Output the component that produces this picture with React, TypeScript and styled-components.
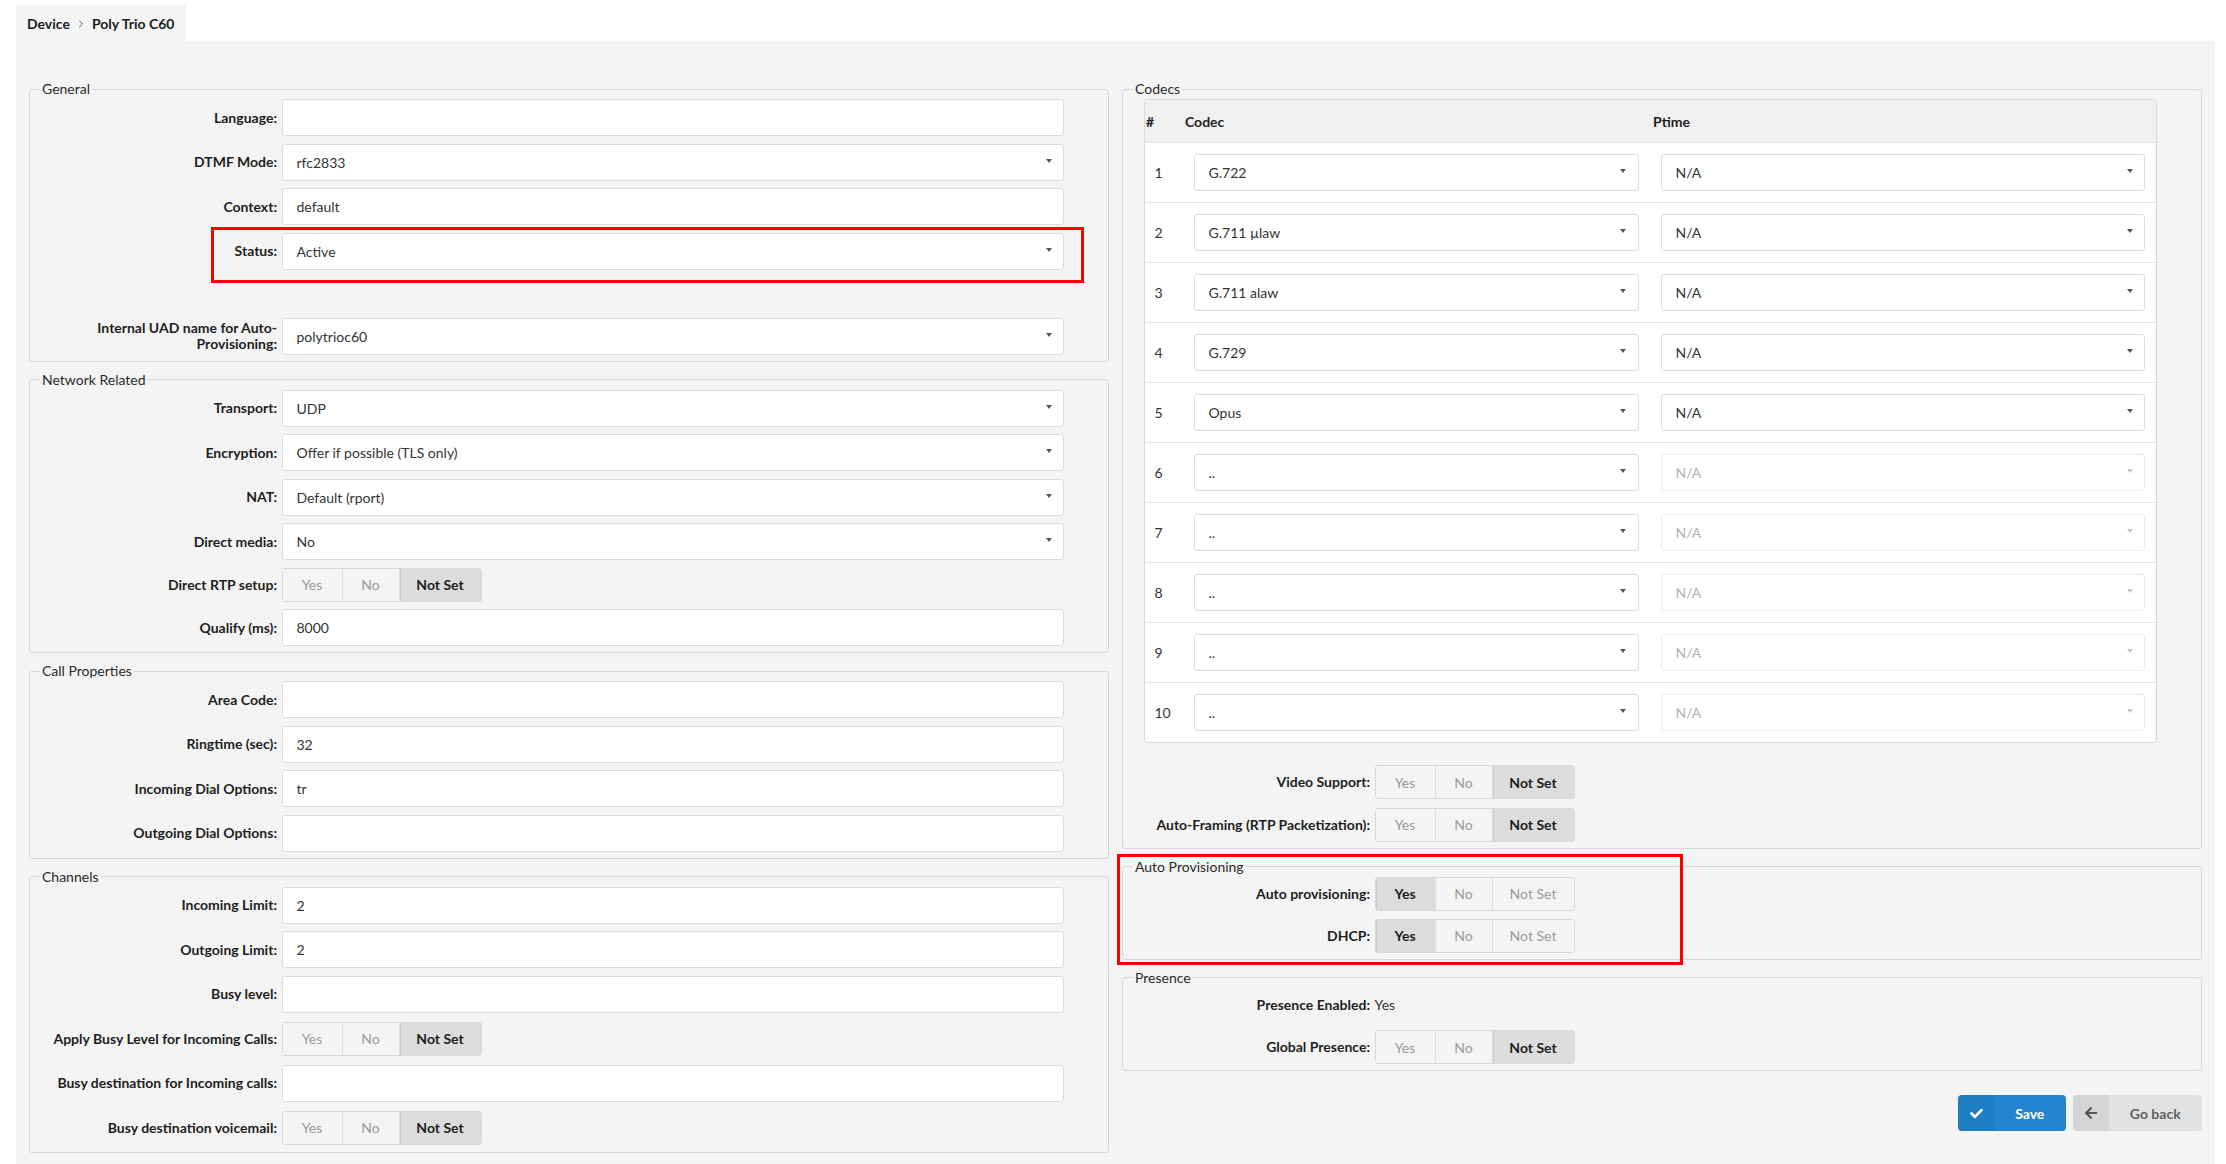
import React from "react";
import styled, { createGlobalStyle, css } from "styled-components";
import { FaCheck, FaArrowLeft } from "react-icons/fa";
import { ChevronRight } from "lucide-react";

const GlobalStyle = createGlobalStyle`
  html, body { margin: 0; padding: 0; background: #ffffff; }
  body { font-family: Lato, "Open Sans", "Liberation Sans", sans-serif; color: #212121; }
  * { box-sizing: border-box; }
`;

const Page = styled.div`
  padding: 5px 11px 0 16px;
`;

const Crumbs = styled.div`
  display: inline-flex;
  align-items: center;
  height: 36px;
  padding: 0 11px;
  background: #f4f4f4;
  font-size: 14px;
  font-weight: 700;
  color: #1b1c1d;
  gap: 5px;
  svg { color: #555; margin-top: 1px; }
`;

const Panel = styled.div`
  background: #f4f4f4;
  padding: 40px 13px 14px;
  display: grid;
  grid-template-columns: 1fr 1fr;
  column-gap: 13px;
  align-items: start;
`;

const Column = styled.div`
  display: flex;
  flex-direction: column;
  gap: 10px;
`;

const Fieldset = styled.fieldset`
  margin: 0;
  min-width: 0;
  border: 1px solid #d6d6d6;
  border-radius: 3px;
  padding: 2px 0 6px;
`;

const Legend = styled.legend`
  margin-left: 10px;
  padding: 0 2px;
  font-size: 14px;
  line-height: 16px;
  color: #2a2a2a;
`;

const Rows = styled.div<{ $padRight?: number; $gap?: number }>`
  display: flex;
  flex-direction: column;
  gap: ${(p) => p.$gap ?? 7.5}px;
  padding-right: ${(p) => p.$padRight ?? 0}px;
`;

const Row = styled.div<{ $minH?: number }>`
  position: relative;
  display: grid;
  grid-template-columns: 247px 1fr;
  column-gap: 4.5px;
  align-items: center;
  min-height: ${(p) => p.$minH ?? 37}px;
`;

const Label = styled.label`
  text-align: right;
  font-weight: 700;
  font-size: 14px;
  line-height: 16px;
  color: #1e1e1e;
`;

const fieldBase = css`
  height: 37px;
  border: 1px solid #dcdcdc;
  border-radius: 3px;
  background: #ffffff;
  padding: 0 11.5px 0 14px;
  font-size: 14px;
  color: #333333;
  display: flex;
  align-items: center;
`;

const Input = styled.div`
  ${fieldBase}
`;

const SelectBox = styled.div<{ $disabled?: boolean }>`
  ${fieldBase}
  justify-content: space-between;
  ${(p) =>
    p.$disabled &&
    css`
      border-color: #ececec;
      color: #b0b0b0;
    `}
`;

const Caret = styled.span<{ $disabled?: boolean }>`
  width: 0;
  height: 0;
  border-left: 3.5px solid transparent;
  border-right: 3.5px solid transparent;
  border-top: 4px solid ${(p) => (p.$disabled ? "#c4c4c4" : "#555555")};
  margin-top: -3px;
`;

const Select = ({ value, disabled }: { value: string; disabled?: boolean }) => (
  <SelectBox $disabled={disabled}>
    <span>{value}</span>
    <Caret $disabled={disabled} />
  </SelectBox>
);

const ToggleGroup = styled.div`
  display: inline-flex;
  height: 34px;
  border: 1px solid #d8d8d8;
  border-radius: 3px;
  overflow: hidden;
  justify-self: start;
`;

const Seg = styled.div<{ $active?: boolean; $w: number }>`
  width: ${(p) => p.$w}px;
  display: flex;
  align-items: center;
  justify-content: center;
  font-size: 14px;
  color: ${(p) => (p.$active ? "#1e1e1e" : "#9a9a9a")};
  font-weight: ${(p) => (p.$active ? 700 : 400)};
  background: ${(p) => (p.$active ? "#dcdcdc" : "#f4f4f4")};
  box-shadow: ${(p) => (p.$active ? "inset 1px 0 0 #c9c9c9" : "none")};
  & + & { border-left: 1px solid #dddddd; }
`;

type Choice = "Yes" | "No" | "Not Set";
const Toggle = ({ value }: { value: Choice }) => (
  <ToggleGroup>
    <Seg $w={59} $active={value === "Yes"}>Yes</Seg>
    <Seg $w={57} $active={value === "No"}>No</Seg>
    <Seg $w={82} $active={value === "Not Set"}>Not Set</Seg>
  </ToggleGroup>
);

const Spacer = styled.div<{ $h: number }>`
  height: ${(p) => p.$h}px;
`;

const Annotation = styled.div`
  position: absolute;
  border: 3px solid #ff0000;
  pointer-events: none;
`;

const StatusMark = styled(Annotation)`
  top: -6px;
  left: 181px;
  right: -20px;
  bottom: -13px;
`;

const Highlight = styled.div`
  position: relative;
`;

const ProvMark = styled(Annotation)`
  top: -5px;
  left: -5.5px;
  width: 566px;
  bottom: -5px;
`;

const Table = styled.div`
  margin: 0 44px 0 20.5px;
  border: 1px solid #d9d9d9;
  border-radius: 3px;
  background: #ffffff;
  overflow: hidden;
`;

const THead = styled.div`
  display: grid;
  grid-template-columns: 39px 468px 1fr;
  align-items: center;
  height: 43px;
  padding-left: 1.5px;
  background: #f0f0f0;
  border-bottom: 1px solid #e2e2e2;
  font-size: 14px;
  font-weight: 700;
  color: #1e1e1e;
`;

const TRow = styled.div`
  display: grid;
  grid-template-columns: 49px 445px 1fr;
  align-items: center;
  height: 60px;
  padding-right: 11px;
  border-bottom: 1px solid #e6e6e6;
  font-size: 14px;
  color: #333333;
  &:last-child { border-bottom: none; height: 59px; }
  & > :last-child { margin-left: 22px; }
`;

const RowNum = styled.div`
  padding-left: 10px;
`;

const CodecExtras = styled.div`
  margin-top: 22px;
`;

const Value = styled.div`
  font-size: 14px;
  color: #333333;
`;

const Actions = styled.div`
  margin-top: 14px;
  display: flex;
  justify-content: flex-end;
  gap: 7.5px;
`;

const Btn = styled.button<{ $primary?: boolean; $w: number }>`
  display: flex;
  align-items: stretch;
  width: ${(p) => p.$w}px;
  height: 36px;
  padding: 0;
  border: none;
  border-radius: 4px;
  overflow: hidden;
  font-family: Lato, "Liberation Sans", sans-serif;
  font-size: 14px;
  font-weight: 700;
  background: ${(p) => (p.$primary ? "#2185d0" : "#e0e1e2")};
  color: ${(p) => (p.$primary ? "#ffffff" : "#5f5f5f")};
`;

const BtnIcon = styled.span<{ $w: number }>`
  width: ${(p) => p.$w}px;
  display: flex;
  align-items: center;
  justify-content: center;
  background: rgba(0, 0, 0, 0.055);
`;

const BtnText = styled.span`
  flex: 1;
  display: flex;
  align-items: center;
  justify-content: center;
`;

const codecs = [
  { c: "G.722", p: "N/A" },
  { c: "G.711 µlaw", p: "N/A" },
  { c: "G.711 alaw", p: "N/A" },
  { c: "G.729", p: "N/A" },
  { c: "Opus", p: "N/A" },
  { c: "..", p: "N/A", d: true },
  { c: "..", p: "N/A", d: true },
  { c: "..", p: "N/A", d: true },
  { c: "..", p: "N/A", d: true },
  { c: "..", p: "N/A", d: true },
];

export default function App() {
  return (
    <Page>
      <GlobalStyle />
      <Crumbs>
        <span>Device</span>
        <ChevronRight size={12} strokeWidth={2} />
        <span>Poly Trio C60</span>
      </Crumbs>
      <Panel>
        <Column>
          <Fieldset>
            <Legend>General</Legend>
            <Rows $padRight={44}>
              <Row>
                <Label>Language:</Label>
                <Input />
              </Row>
              <Row>
                <Label>DTMF Mode:</Label>
                <Select value="rfc2833" />
              </Row>
              <Row>
                <Label>Context:</Label>
                <Input>default</Input>
              </Row>
              <Row>
                <Label>Status:</Label>
                <Select value="Active" />
                <StatusMark />
              </Row>
              <Spacer $h={33} />
              <Row>
                <Label>
                  Internal UAD name for Auto-
                  <br />
                  Provisioning:
                </Label>
                <Select value="polytrioc60" />
              </Row>
            </Rows>
          </Fieldset>

          <Fieldset>
            <Legend>Network Related</Legend>
            <Rows $padRight={44}>
              <Row>
                <Label>Transport:</Label>
                <Select value="UDP" />
              </Row>
              <Row>
                <Label>Encryption:</Label>
                <Select value="Offer if possible (TLS only)" />
              </Row>
              <Row>
                <Label>NAT:</Label>
                <Select value="Default (rport)" />
              </Row>
              <Row>
                <Label>Direct media:</Label>
                <Select value="No" />
              </Row>
              <Row $minH={34}>
                <Label>Direct RTP setup:</Label>
                <Toggle value="Not Set" />
              </Row>
              <Row>
                <Label>Qualify (ms):</Label>
                <Input>8000</Input>
              </Row>
            </Rows>
          </Fieldset>

          <Fieldset>
            <Legend>Call Properties</Legend>
            <Rows $padRight={44}>
              <Row>
                <Label>Area Code:</Label>
                <Input />
              </Row>
              <Row>
                <Label>Ringtime (sec):</Label>
                <Input>32</Input>
              </Row>
              <Row>
                <Label>Incoming Dial Options:</Label>
                <Input>tr</Input>
              </Row>
              <Row>
                <Label>Outgoing Dial Options:</Label>
                <Input />
              </Row>
            </Rows>
          </Fieldset>

          <Fieldset>
            <Legend>Channels</Legend>
            <Rows $padRight={44}>
              <Row>
                <Label>Incoming Limit:</Label>
                <Input>2</Input>
              </Row>
              <Row>
                <Label>Outgoing Limit:</Label>
                <Input>2</Input>
              </Row>
              <Row>
                <Label>Busy level:</Label>
                <Input />
              </Row>
              <Row>
                <Label>Apply Busy Level for Incoming Calls:</Label>
                <Toggle value="Not Set" />
              </Row>
              <Row>
                <Label>Busy destination for Incoming calls:</Label>
                <Input />
              </Row>
              <Row>
                <Label>Busy destination voicemail:</Label>
                <Toggle value="Not Set" />
              </Row>
            </Rows>
          </Fieldset>
        </Column>

        <Column>
          <Fieldset>
            <Legend>Codecs</Legend>
            <Table>
              <THead>
                <span>#</span>
                <span>Codec</span>
                <span>Ptime</span>
              </THead>
              {codecs.map((r, i) => (
                <TRow key={i}>
                  <RowNum>{i + 1}</RowNum>
                  <Select value={r.c} />
                  <Select value={r.p} disabled={r.d} />
                </TRow>
              ))}
            </Table>
            <CodecExtras>
              <Rows $gap={8.5}>
                <Row $minH={34}>
                  <Label>Video Support:</Label>
                  <Toggle value="Not Set" />
                </Row>
                <Row $minH={34}>
                  <Label>Auto-Framing (RTP Packetization):</Label>
                  <Toggle value="Not Set" />
                </Row>
              </Rows>
            </CodecExtras>
          </Fieldset>

          <Highlight>
            <Fieldset>
              <Legend>Auto Provisioning</Legend>
              <Rows $gap={8}>
                <Row $minH={34}>
                  <Label>Auto provisioning:</Label>
                  <Toggle value="Yes" />
                </Row>
                <Row $minH={34}>
                  <Label>DHCP:</Label>
                  <Toggle value="Yes" />
                </Row>
              </Rows>
            </Fieldset>
            <ProvMark />
          </Highlight>

          <Fieldset>
            <Legend>Presence</Legend>
            <Rows $gap={8.5}>
              <Row $minH={34}>
                <Label>Presence Enabled:</Label>
                <Value>Yes</Value>
              </Row>
              <Row $minH={34}>
                <Label>Global Presence:</Label>
                <Toggle value="Not Set" />
              </Row>
            </Rows>
          </Fieldset>

          <Actions>
            <Btn $primary $w={107.5}>
              <BtnIcon $w={36}>
                <FaCheck size={13} />
              </BtnIcon>
              <BtnText>Save</BtnText>
            </Btn>
            <Btn $w={129}>
              <BtnIcon $w={35.5}>
                <FaArrowLeft size={14} color="#555" />
              </BtnIcon>
              <BtnText>Go back</BtnText>
            </Btn>
          </Actions>
        </Column>
      </Panel>
    </Page>
  );
}
